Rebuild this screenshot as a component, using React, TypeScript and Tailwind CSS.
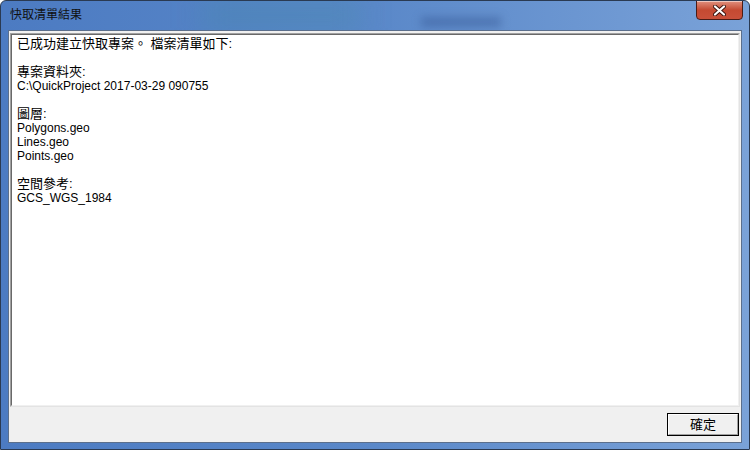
import React from "react";

const lines: string[] = [
  "已成功建立快取專案。 檔案清單如下:",
  "",
  "專案資料夾:",
  "C:\\QuickProject 2017-03-29 090755",
  "",
  "圖層:",
  "Polygons.geo",
  "Lines.geo",
  "Points.geo",
  "",
  "空間參考:",
  "GCS_WGS_1984",
];

const font = {
  fontFamily: '"Liberation Sans", "Noto Sans CJK TC", sans-serif',
};

const hasCjk = (s: string) => /[\u3000-\u9fff]/.test(s);

export default function App() {
  return (
    <div
      className="w-[750px] h-[450px] flex flex-col rounded-t-[6px] border border-[#2a3a52] bg-gradient-to-r from-[#4c7bc2] via-[#5a88c9] to-[#7aa2d8] overflow-hidden"
      style={font}
    >
      {/* title bar */}
      <div className="h-[29px] shrink-0 flex items-start justify-between relative overflow-hidden">
        <div className="absolute left-[200px] top-0 w-[160px] h-[28px] bg-[#3f8a9a]/30 blur-[14px]" />
        <div className="absolute left-[420px] top-[16px] w-[80px] h-[10px] bg-[#2c4e8a]/40 blur-[4px]" />
        <span className="relative mt-[7px] ml-[9px] text-[12px] leading-[14px] text-[#111]">
          快取清單結果
        </span>
        <button className="relative mr-[6px] w-[47px] h-[20px] -mt-px flex items-center justify-center rounded-b-[4px] border border-[#4a1c16] bg-gradient-to-b from-[#e0907e] via-[#c44a32] to-[#c9503a] shadow-[inset_0_1px_0_rgba(255,255,255,0.5)]">
          <svg width="13" height="11" viewBox="0 0 13 11">
            <path
              d="M2 1.5 L11 9.5 M11 1.5 L2 9.5"
              stroke="#3a1410"
              strokeWidth="4"
              strokeLinecap="round"
            />
            <path
              d="M2 1.5 L11 9.5 M11 1.5 L2 9.5"
              stroke="#ffffff"
              strokeWidth="2.2"
              strokeLinecap="round"
            />
          </svg>
        </button>
      </div>

      {/* client area */}
      <div className="flex-1 mx-[7px] mb-[6px] flex flex-col bg-[#f0f0f0] border border-[#5b6f8c]">
        <div className="flex-1 mx-px mt-[2px] border border-[#a0a0a0] border-r-[#e3e3e3] border-b-[#e3e3e3]">
          <div className="h-full bg-white border border-[#696969] border-r-[#f0f0f0] border-b-[#f0f0f0] pl-[5px] pt-[2px]">
            {lines.map((l, i) => (
              <div
                key={i}
                className={
                  hasCjk(l)
                    ? "h-[14px] text-[13px] leading-[14px] text-black whitespace-pre"
                    : "h-[14px] text-[12px] leading-[14px] text-black whitespace-pre"
                }
              >
                {l || " "}
              </div>
            ))}
          </div>
        </div>
        <div className="h-[35px] shrink-0 flex justify-end items-start pt-[6px] pr-[2px]">
          <button className="w-[72px] h-[23px] border border-black bg-[#f0f0f0] text-[13px] text-black">
            <div className="w-full h-full border border-white border-r-[#a0a0a0] border-b-[#a0a0a0] flex items-center justify-center">
              確定
            </div>
          </button>
        </div>
      </div>
    </div>
  );
}
